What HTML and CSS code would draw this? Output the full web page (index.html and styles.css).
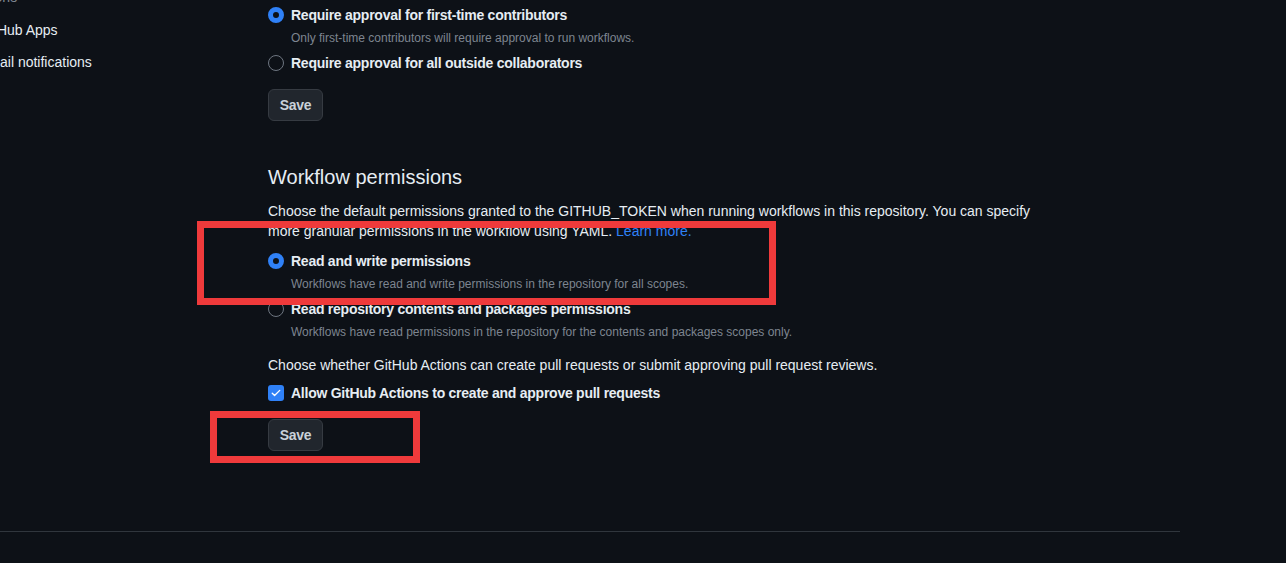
FILE: index.html
```html
<!DOCTYPE html>
<html lang="en">
<head>
<meta charset="utf-8">
<title>Actions settings</title>
<link rel="stylesheet" href="styles.css">
</head>
<body>
<div class="page">
  <nav class="sidebar">
    <div class="side-heading">Integrations</div>
    <a class="side-link">GitHub Apps</a>
    <a class="side-link">Email notifications</a>
  </nav>
  <main class="content">
    <label class="choice first">
      <span class="radio checked"></span>
      <span class="choice-label">Require approval for first-time contributors</span>
    </label>
    <p class="note">Only first-time contributors will require approval to run workflows.</p>
    <label class="choice gap-s">
      <span class="radio"></span>
      <span class="choice-label">Require approval for all outside collaborators</span>
    </label>
    <button class="btn save-1">Save</button>

    <h2 class="section-title">Workflow permissions</h2>
    <p class="desc">Choose the default permissions granted to the GITHUB_TOKEN when running workflows in this repository. You can specify more granular permissions in the workflow using YAML. <a class="link">Learn more.</a></p>

    <label class="choice gap-m">
      <span class="radio checked"></span>
      <span class="choice-label">Read and write permissions</span>
    </label>
    <p class="note">Workflows have read and write permissions in the repository for all scopes.</p>
    <label class="choice gap-s">
      <span class="radio"></span>
      <span class="choice-label">Read repository contents and packages permissions</span>
    </label>
    <p class="note">Workflows have read permissions in the repository for the contents and packages scopes only.</p>

    <p class="desc gap-l">Choose whether GitHub Actions can create pull requests or submit approving pull request reviews.</p>
    <label class="choice gap-c">
      <span class="checkbox">
        <svg viewBox="0 0 16 16" width="12" height="12"><path d="M3 8.3l3.1 3.1L13 4.5" fill="none" stroke="#ffffff" stroke-width="1.8" stroke-linecap="round" stroke-linejoin="round"/></svg>
      </span>
      <span class="choice-label">Allow GitHub Actions to create and approve pull requests</span>
    </label>
    <button class="btn save-2">Save</button>
  </main>
</div>
<div class="footer-line"></div>

<div class="mark mark-1"></div>
<div class="mark mark-2"></div>
</body>
</html>
```

FILE: styles.css
```css
* { box-sizing: border-box; }

html, body {
  margin: 0;
  padding: 0;
  background: #0d1117;
  color: #e6edf3;
  font-family: "Liberation Sans", Arial, sans-serif;
  font-size: 14px;
  overflow: hidden;
}

.page {
  display: flex;
  width: 1180px;
}

.sidebar {
  width: 289px;
  flex: none;
  margin-left: -21px;
  margin-top: -10px;
  display: flex;
  flex-direction: column;
}

.side-heading {
  color: #7d8590;
  font-size: 14px;
  line-height: 20px;
  height: 21px;
  margin-top: -3px;
  margin-left: -35px;
  margin-bottom: 6px;
}

.side-link {
  color: #e6edf3;
  font-size: 14px;
  line-height: 32px;
  height: 32px;
}

.content {
  display: flex;
  flex-direction: column;
  align-items: flex-start;
  width: 780px;
  padding-top: 5px;
}

.choice {
  display: flex;
  align-items: center;
  gap: 7px;
  height: 20px;
}

.choice-label {
  font-weight: 700;
  font-size: 14px;
  line-height: 20px;
  letter-spacing: -0.25px;
  color: #e6edf3;
}

.radio {
  width: 16px;
  height: 16px;
  border-radius: 50%;
  border: 1px solid #6e7681;
  flex: none;
}

.radio.checked {
  border: 5px solid #2f81f7;
  background: #0d1117;
}

.checkbox {
  width: 16px;
  height: 16px;
  border-radius: 3px;
  background: #2f81f7;
  display: flex;
  align-items: center;
  justify-content: center;
  flex: none;
}

.note {
  margin: 4px 0 0 23px;
  font-size: 12px;
  line-height: 18px;
  color: #7d8590;
}

.gap-s { margin-top: 6px; }
.gap-m { margin-top: 10px; }
.gap-l { margin-top: 14px; }
.gap-c { margin-top: 8px; }

.btn {
  font-family: inherit;
  font-size: 14px;
  font-weight: 700;
  letter-spacing: -0.3px;
  color: #c9d1d9;
  background: #21262d;
  border: 1px solid #363b42;
  border-radius: 6px;
  height: 32px;
  width: 55px;
  padding: 0;
  margin-top: 16px;
}

.section-title {
  margin: 41px 0 0;
  font-size: 20px;
  line-height: 30px;
  font-weight: 400;
  color: #e6edf3;
}

.desc {
  margin: 9px 0 0;
  font-size: 14px;
  line-height: 20px;
  color: #e6edf3;
}

.desc.gap-l { margin-top: 14px; }

.link { color: #2f81f7; }

.footer-line {
  width: 1180px;
  height: 1px;
  background: #30363d;
  margin-top: 80px;
}

.mark {
  position: absolute;
  border: 7px solid #ef3a3b;
}

.mark-1 {
  left: 197px;
  top: 221px;
  width: 579px;
  height: 84px;
}

.mark-2 {
  left: 210px;
  top: 411px;
  width: 210px;
  height: 52px;
}
```
